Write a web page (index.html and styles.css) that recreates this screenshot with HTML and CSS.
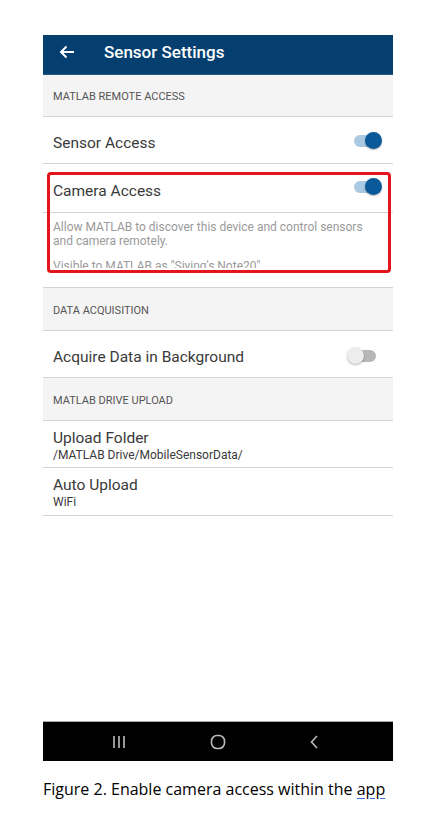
FILE: index.html
```html
<!DOCTYPE html>
<html>
<head>
<meta charset="utf-8">
<link rel="stylesheet" href="styles.css">
</head>
<body>
<div class="phone">
  <header class="appbar">
    <svg class="back" width="16" height="14" viewBox="0 0 16 14"><path d="M15 7H2M7.5 1.5L2 7l5.5 5.5" fill="none" stroke="#fff" stroke-width="2"/></svg>
    <span class="title">Sensor Settings</span>
  </header>
  <div class="content">
    <div class="section first">MATLAB REMOTE ACCESS</div>
    <div class="row">
      <span class="label">Sensor Access</span>
      <span class="toggle on"><span class="knob"></span></span>
    </div>
    <div class="row tall">
      <span class="label">Camera Access</span>
      <span class="toggle on"><span class="knob"></span></span>
    </div>
    <div class="desc">
      <div class="desc-clip">
        <p>Allow MATLAB to discover this device and control sensors and camera remotely.</p>
        <p class="vis">Visible to MATLAB as "Siying's Note20"</p>
      </div>
    </div>
    <div class="section">DATA ACQUISITION</div>
    <div class="row">
      <span class="label">Acquire Data in Background</span>
      <span class="toggle off"><span class="knob"></span></span>
    </div>
    <div class="section">MATLAB DRIVE UPLOAD</div>
    <div class="row two">
      <span class="label">Upload Folder</span>
      <span class="sub">/MATLAB Drive/MobileSensorData/</span>
    </div>
    <div class="row two last">
      <span class="label">Auto Upload</span>
      <span class="sub">WiFi</span>
    </div>
    <div class="highlight"></div>
  </div>
  <nav class="navbar">
    <svg width="14" height="14" viewBox="0 0 14 14"><path d="M2 1v12M7 1v12M12 1v12" stroke="#bdbdbd" stroke-width="1.6"/></svg>
    <svg width="16" height="16" viewBox="0 0 16 16"><rect x="1.5" y="1.5" width="13" height="13" rx="5.5" fill="none" stroke="#bdbdbd" stroke-width="1.6"/></svg>
    <svg width="10" height="14" viewBox="0 0 10 14"><path d="M8 1L2.5 7 8 13" fill="none" stroke="#bdbdbd" stroke-width="1.6"/></svg>
  </nav>
</div>
<p class="caption">Figure 2. Enable camera access within the <span class="squig">app</span></p>
</body>
</html>
```
FILE: styles.css
```css
* { box-sizing: border-box; }
html, body { margin: 0; padding: 0; background: #fff; }
body { font-family: Roboto, "Noto Sans", sans-serif; }

.phone {
  width: 350px;
  margin: 35px 0 0 43px;
  display: flex;
  flex-direction: column;
}

.appbar {
  height: 40px;
  background: #053f70;
  display: flex;
  align-items: center;
  padding-left: 16px;
  padding-bottom: 5px;
  border-bottom: 1px solid #2a5b86;
}
.back { margin-right: 29px; }
.title {
  color: #fff;
  font-size: 17px;
  font-weight: 500;
}

.content {
  height: 646px;
  background: #fff;
  position: relative;
  display: flex;
  flex-direction: column;
}

.section {
  height: 43px;
  flex: none;
  background: #f4f4f4;
  border-bottom: 1px solid #d4d4d4;
  padding: 16px 0 0 10px;
  font-size: 11px;
  color: #555;
}
.section.first { height: 42px; padding-top: 15px; }

.row {
  height: 47px;
  flex: none;
  border-bottom: 1px solid #d4d4d4;
  display: flex;
  align-items: center;
  justify-content: space-between;
  padding: 0 11px 0 10px;
}
.row > .label { margin-top: 5px; }
.row .toggle { margin-top: 1px; }
.row.tall { height: 49px; }
.row.tall .toggle { margin-bottom: 3px; margin-top: 0; }
.row.last { height: 48px; }
.row.two {
  flex-direction: column;
  align-items: flex-start;
  justify-content: center;
  padding-top: 2px;
}
.row.two > .label { margin-top: 0; line-height: 18px; }
.label {
  font-size: 15.5px;
  color: #3a3a3a;
}
.sub {
  font-size: 12px;
  line-height: 14px;
  color: #3a3a3a;
  margin-top: 1px;
}

.toggle {
  position: relative;
  width: 29px;
  height: 17px;
  display: flex;
  align-items: center;
}
.toggle::before {
  content: "";
  display: block;
  width: 25px;
  height: 12px;
  border-radius: 6px;
  margin-left: 1px;
  background: #aac9e2;
}
.toggle .knob {
  position: absolute;
  top: 0;
  width: 17px;
  height: 17px;
  border-radius: 50%;
  box-shadow: 0 1px 2px rgba(0,0,0,0.3);
}
.toggle.on .knob { right: 0; background: #0a5a9a; }
.row .toggle.off { margin-right: 6px; margin-top: 3px; }
.toggle.off::before { background: #b7b7b7; margin-left: 4px; }
.toggle.off .knob { left: 0; background: #ededed; }

.desc {
  height: 75px;
  flex: none;
  border-bottom: 1px solid #d4d4d4;
}
.desc-clip {
  height: 55px;
  overflow: hidden;
  padding: 7px 10px 0 10px;
}
.desc p {
  margin: 0;
  font-size: 12px;
  line-height: 14px;
  color: #9a9a9a;
}
.desc p.vis { margin-top: 11px; }

.highlight {
  position: absolute;
  left: 4px;
  top: 97px;
  width: 344px;
  height: 101px;
  border: 3.5px solid #e3141c;
  border-radius: 4px;
}

.navbar {
  height: 40px;
  background: #000;
  border-top: 1px solid #a8a8a8;
  display: flex;
  align-items: center;
  padding-left: 69px;
  gap: 81px;
}
.navbar svg:nth-child(2) { margin-left: 3px; }
.navbar svg:nth-child(3) { margin-left: 2px; }

.caption {
  margin: 17px 0 0 43px;
  font-family: "Open Sans", "Liberation Sans", sans-serif;
  font-size: 16px;
  color: #000;
}
.squig {
  text-decoration: underline;
  text-decoration-color: #3b6fd8;
  text-underline-offset: 3px;
}
```
